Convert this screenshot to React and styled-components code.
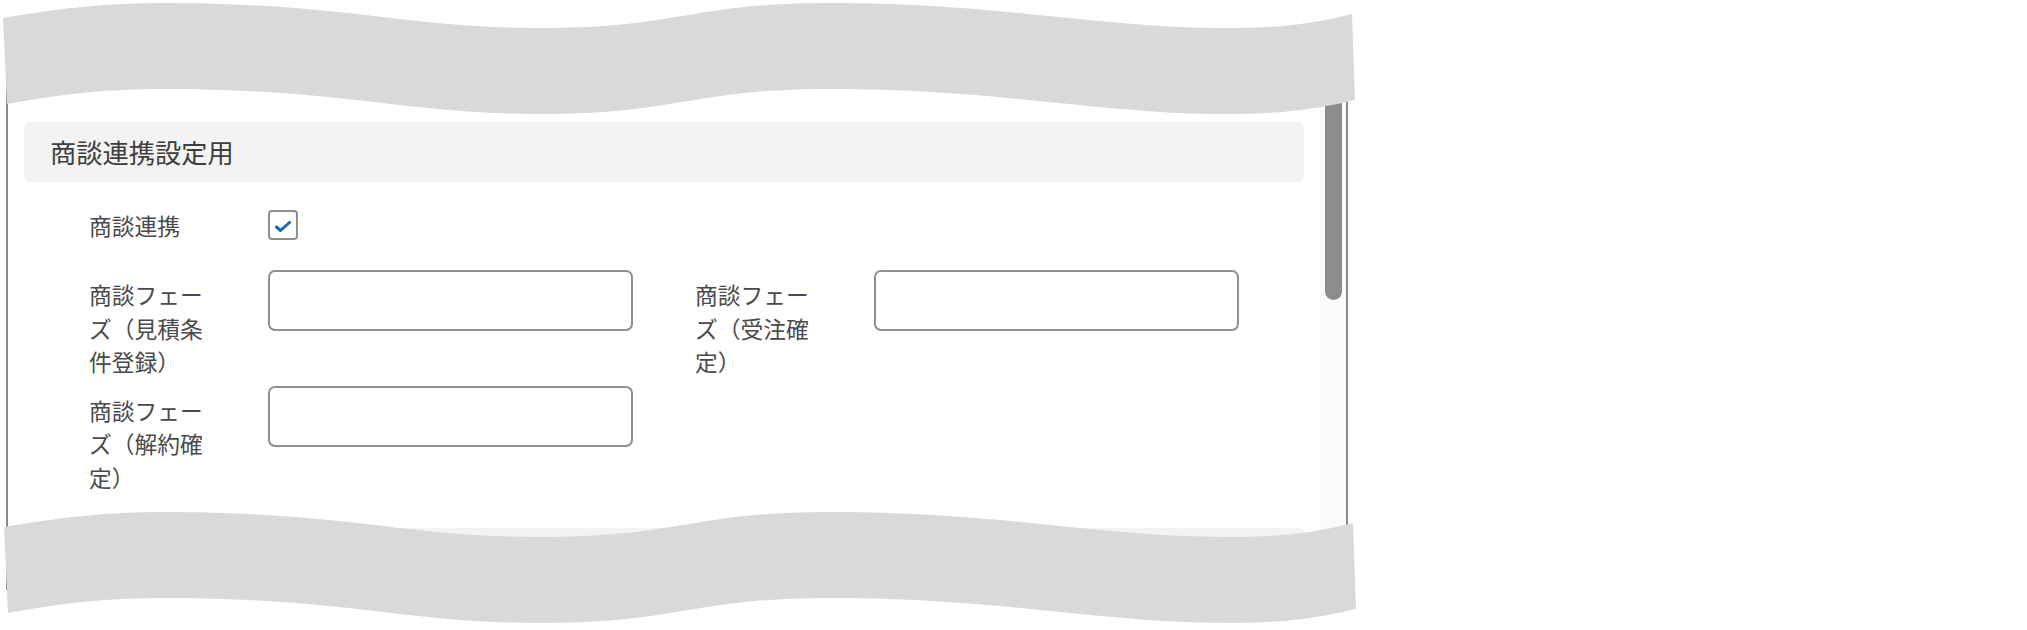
import React from 'react'
import styled, { createGlobalStyle } from 'styled-components'

const GlobalStyle = createGlobalStyle`
  html, body {
    margin: 0;
    padding: 0;
    background: #fff;
  }
  body {
    font-family: "Noto Sans CJK JP", "Noto Sans", sans-serif;
  }
`

const FIELDS = [
  { label: '商談フェーズ（見積条件登録）' },
  { label: '商談フェーズ（受注確定）' },
  { label: '商談フェーズ（解約確定）' },
]

const WAVE =
  'M3,18 C60,8 110,3 160,3 C350,3 400,28 540,28 C680,28 690,3 830,3 ' +
  'C1000,3 1100,28 1225,28 C1290,28 1320,22 1352,14 L1355,100 ' +
  'C1320,108 1290,114 1225,114 C1100,114 1000,89 830,89 ' +
  'C690,89 680,114 540,114 C400,114 350,89 160,89 C110,89 60,94 7,104 Z'

export default function App() {
  return (
    <Stage>
      <GlobalStyle />
      <Panel>
        <Content>
          <SectionHeader>商談連携設定用</SectionHeader>

          <Form>
            <CheckRow>
              <Label>商談連携</Label>
              <CheckBox>
                <svg width="16" height="11" viewBox="0 0 16 11">
                  <path
                    d="M1.5 6 L5.5 9.5 L14.5 1.5"
                    fill="none"
                    stroke="#1668b5"
                    strokeWidth="3"
                    strokeLinecap="round"
                    strokeLinejoin="round"
                  />
                </svg>
              </CheckBox>
            </CheckRow>

            <FieldGrid>
              {FIELDS.map((f, i) => (
                <Field key={i}>
                  <FieldLabel>{f.label}</FieldLabel>
                  <TextInput type="text" />
                </Field>
              ))}
            </FieldGrid>
          </Form>

          <SectionHeader />
        </Content>

        <ScrollTrack>
          <ScrollThumb />
        </ScrollTrack>
      </Panel>

      <Tear width="1370" height="630" viewBox="0 0 1370 630">
        <path d={WAVE} fill="#d9d9d9" />
        <path d={WAVE} fill="#d9d9d9" transform="translate(1 509)" />
      </Tear>
    </Stage>
  )
}

const Stage = styled.div`
  position: relative;
  width: 2027px;
  height: 630px;
  overflow: hidden;
  padding-top: 24px;
  padding-left: 6px;
  box-sizing: border-box;
`

const Panel = styled.div`
  width: 1342px;
  height: 566px;
  box-sizing: border-box;
  border-left: 2px solid #8a8a8a;
  border-right: 2px solid #8a8a8a;
  display: grid;
  grid-template-columns: 1fr 26px;
  background: #fff;
`

const Content = styled.div`
  padding: 98px 16px 0 16px;
  overflow: hidden;
`

const SectionHeader = styled.div`
  height: 60px;
  box-sizing: border-box;
  display: flex;
  align-items: center;
  padding-left: 26px;
  background: #f3f3f3;
  border-radius: 6px;
  color: #3e3e3c;
  font-size: 26.25px;
`

const Form = styled.div`
  padding: 26.5px 0 34px 65px;
`

const CheckRow = styled.div`
  display: flex;
  align-items: center;
  height: 33.5px;
  margin-bottom: 28px;
`

const Label = styled.div`
  width: 179px;
  flex: none;
  color: #4a4a4a;
  font-size: 22.75px;
  line-height: 33.5px;
`

const CheckBox = styled.div`
  width: 30px;
  height: 30px;
  box-sizing: border-box;
  border: 2px solid #8f8f8f;
  border-radius: 4px;
  background: #fff;
  display: flex;
  align-items: center;
  justify-content: center;
  padding-top: 2px;
`

const FieldGrid = styled.div`
  display: grid;
  grid-template-columns: 544px 544px;
  column-gap: 62px;
  row-gap: 7px;
`

const Field = styled.div`
  display: grid;
  grid-template-columns: 179px 365px;
  align-items: start;
`

const FieldLabel = styled.div`
  width: 130px;
  padding-top: 8px;
  color: #4a4a4a;
  font-size: 22.75px;
  line-height: 33.5px;
`

const TextInput = styled.input`
  width: 365px;
  height: 61px;
  box-sizing: border-box;
  border: 2px solid #8f8f8f;
  border-radius: 7px;
  background: #fff;
  margin: 0;
  font-family: inherit;
  font-size: 22px;
  padding: 0 14px;
  outline: none;
`

const ScrollTrack = styled.div`
  background: #fafafa;
  padding-top: 36px;
  padding-left: 5px;
`

const ScrollThumb = styled.div`
  width: 17px;
  height: 240px;
  background: #8c8c8c;
  border-radius: 9px;
`

const Tear = styled.svg`
  position: absolute;
  left: 0;
  top: 0;
  pointer-events: none;
`
